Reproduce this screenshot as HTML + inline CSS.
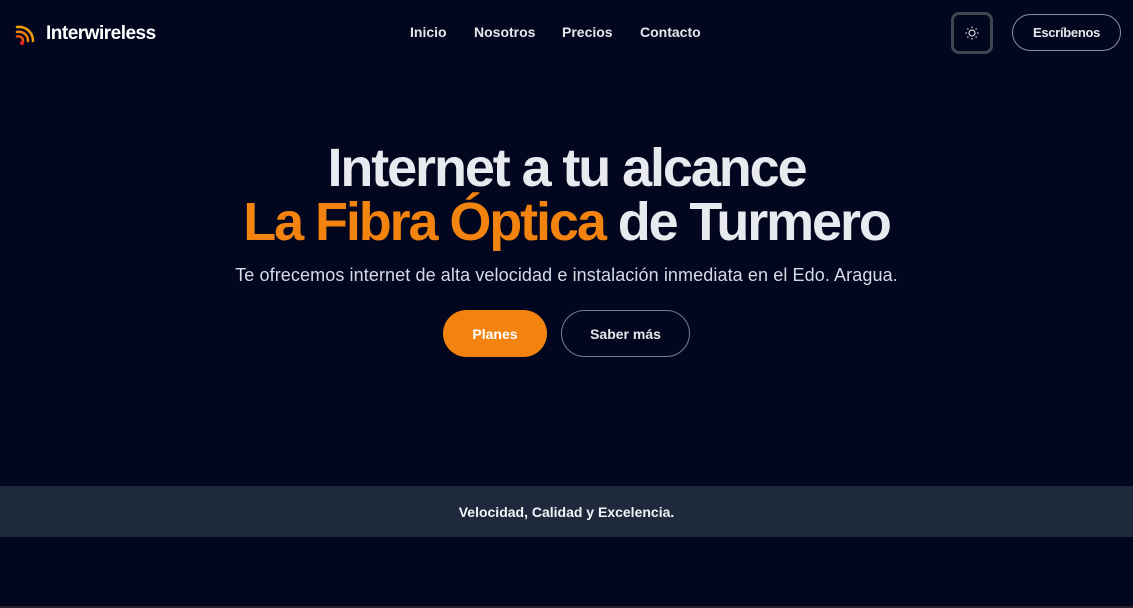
<!DOCTYPE html>
<html><head><meta charset="utf-8"><style>
*{margin:0;padding:0;box-sizing:border-box}
body{width:1133px;height:608px;overflow:hidden;background:#03061f;font-family:"Liberation Sans",sans-serif;color:#f1f5f9;position:relative}
.logo{position:absolute;left:14px;top:22px;display:flex;align-items:center}
.logo span{font-weight:bold;font-size:19px;letter-spacing:-0.5px;margin-left:10px;color:#fff}
nav{position:absolute;top:24px;left:410px;font-size:14px;font-weight:bold;color:#e5e7eb}
nav a{position:absolute;white-space:nowrap}
.theme{position:absolute;left:951px;top:12px;width:42px;height:42px;border:3px solid #3f4653;border-radius:8px;display:flex;align-items:center;justify-content:center}
.wr{position:absolute;left:1012px;top:14px;width:109px;height:37px;border:1px solid #8a90a0;border-radius:19px;font-size:13px;font-weight:bold;display:flex;align-items:center;justify-content:center;color:#e5e7eb;letter-spacing:-0.3px}
h1{position:absolute;left:0;width:1133px;text-align:center;font-size:54px;font-weight:bold;letter-spacing:-2.1px;line-height:54px;top:141px;color:#e8eaf0}
h1 .o{color:#f2830f}
.sub{position:absolute;top:265px;width:1133px;text-align:center;font-size:18px;letter-spacing:0.1px;color:#d5dbe6}
.b1{position:absolute;left:443px;top:310px;width:104px;height:47px;border-radius:24px;background:#f2830f;color:#fff;font-size:14px;font-weight:bold;display:flex;align-items:center;justify-content:center}
.b2{position:absolute;left:561px;top:310px;width:129px;height:47px;border-radius:24px;border:1px solid #777d8c;color:#e5e7eb;font-size:14px;font-weight:bold;display:flex;align-items:center;justify-content:center}
.band{position:absolute;top:486px;left:0;width:1133px;height:51px;background:#1e293b;display:flex;align-items:center;justify-content:center;font-size:14px;font-weight:bold;color:#f1f5f9}
.bot{position:absolute;bottom:0;left:0;width:1133px;height:2px;background:#2a2130}
</style></head><body>
<div class="logo"><svg width="22" height="24" viewBox="0 0 22 24"><path d="M3 5 A14 14 0 0 1 19 19" stroke="#f59e0b" stroke-width="2.5" fill="none" stroke-linecap="round"/><path d="M3 10 A9 9 0 0 1 14 19" stroke="#f2830f" stroke-width="2.5" fill="none" stroke-linecap="round"/><path d="M3 14.5 A4.5 4.5 0 0 1 9 19" stroke="#ea580c" stroke-width="2.5" fill="none" stroke-linecap="round"/><circle cx="8" cy="21" r="2.2" fill="#dc2626"/></svg><span>Interwireless</span></div>
<nav><a style="left:0">Inicio</a><a style="left:64px">Nosotros</a><a style="left:152px">Precios</a><a style="left:230px">Contacto</a></nav>
<div class="theme"><svg width="16" height="16" viewBox="0 0 16 16" stroke="#d1d5db" fill="none" stroke-width="1.2"><circle cx="8" cy="8" r="3"/><path d="M8 1.5v1.5M8 13v1.5M1.5 8h1.5M13 8h1.5M3.4 3.4l1 1M11.6 11.6l1 1M3.4 12.6l1-1M11.6 4.4l1-1"/></svg></div>
<div class="wr">Escríbenos</div>
<h1>Internet a tu alcance<br><span class="o">La Fibra Óptica</span> de Turmero</h1>
<div class="sub">Te ofrecemos internet de alta velocidad e instalación inmediata en el Edo. Aragua.</div>
<div class="b1">Planes</div>
<div class="b2">Saber más</div>
<div class="band">Velocidad, Calidad y Excelencia.</div>
<div class="bot"></div>
</body></html>
